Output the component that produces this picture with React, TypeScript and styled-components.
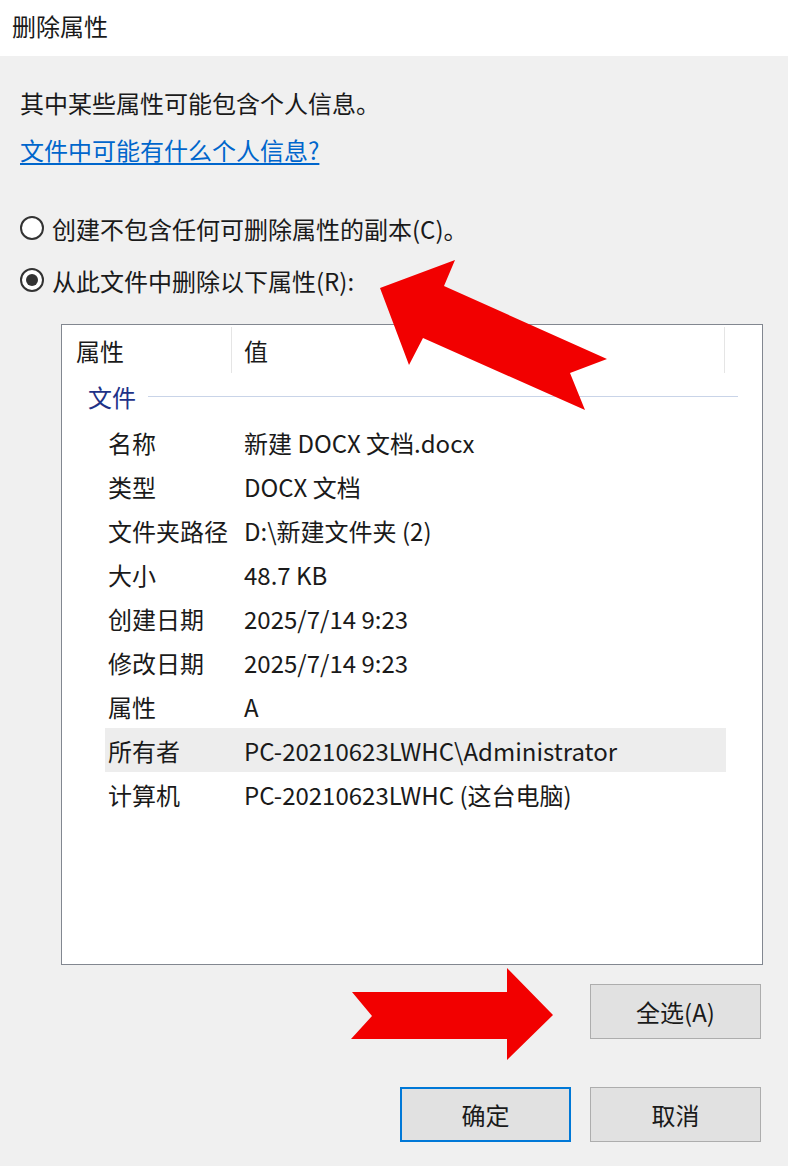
import React from 'react';
import styled, { createGlobalStyle } from 'styled-components';

const GlobalStyle = createGlobalStyle`
  html, body {
    margin: 0;
    padding: 0;
    background: #f0f0f0;
  }
  body {
    font-family: "Noto Sans CJK SC", "Noto Sans", sans-serif;
    color: #1a1a1a;
  }
`;

const Window = styled.div`
  position: relative;
  width: 788px;
  height: 1166px;
  display: flex;
  flex-direction: column;
  background: #f0f0f0;
  overflow: hidden;
  font-size: 24px;
`;

const TitleBar = styled.div`
  height: 56px;
  flex-shrink: 0;
  display: flex;
  align-items: center;
  padding-left: 12px;
  background: #ffffff;
  padding-bottom: 6px;
  box-sizing: border-box;
`;

const Body = styled.div`
  display: flex;
  flex-direction: column;
  padding: 32px 0 0 20px;
`;

const Line = styled.div`
  line-height: 30px;
  height: 30px;
`;

const HelpLink = styled.a`
  line-height: 30px;
  height: 30px;
  margin-top: 17px;
  color: #0066cc;
  text-decoration: underline;
  text-underline-offset: 3px;
  align-self: flex-start;
`;

const RadioRow = styled.label<{ $first?: boolean }>`
  display: flex;
  align-items: center;
  gap: 8px;
  height: 30px;
  margin-top: ${p => (p.$first ? '48px' : '22px')};
`;

const RadioCircle = styled.span<{ $checked?: boolean }>`
  width: 24px;
  height: 24px;
  box-sizing: border-box;
  border: 2px solid #333;
  border-radius: 50%;
  background: #fff;
  display: flex;
  align-items: center;
  justify-content: center;

  &::after {
    content: '';
    width: 12px;
    height: 12px;
    border-radius: 50%;
    background: ${p => (p.$checked ? '#333' : 'transparent')};
  }
`;

const ListBox = styled.div`
  margin: 29px 25px 0 61px;
  height: 641px;
  box-sizing: border-box;
  border: 1px solid #828790;
  background: #ffffff;
  display: flex;
  flex-direction: column;
`;

const HeaderRow = styled.div`
  display: grid;
  grid-template-columns: 170px 493px 1fr;
  height: 48px;
`;

const HeaderCell = styled.div<{ $pad: number }>`
  display: flex;
  align-items: center;
  padding-left: ${p => p.$pad}px;
  border-right: 1px solid #e5e5e5;
  margin: 2px 0 0;

  &:last-child {
    border-right: none;
  }
`;

const GroupRow = styled.div`
  display: flex;
  align-items: center;
  height: 47px;
  padding: 0 24px 0 26px;
  gap: 12px;
  color: #1e3287;

  &::after {
    content: '';
    flex: 1;
    height: 1px;
    background: #c9d4e8;
  }
`;

const Row = styled.div<{ $selected?: boolean }>`
  display: grid;
  grid-template-columns: 126px 1fr;
  height: 44px;
  align-items: center;
  margin: 0 36px 0 43px;
  background: ${p => (p.$selected ? '#ededed' : 'transparent')};
`;

const Label = styled.span`
  padding-left: 3px;
`;

const Value = styled.span`
  padding-left: 13px;
  white-space: nowrap;
`;

const ButtonRow = styled.div<{ $top: number }>`
  display: flex;
  justify-content: flex-end;
  gap: 19px;
  margin-top: ${p => p.$top}px;
  padding-right: 27px;
`;

const Button = styled.button<{ $default?: boolean }>`
  width: 171px;
  height: 55px;
  box-sizing: border-box;
  font-family: inherit;
  font-size: 24px;
  color: #1a1a1a;
  background: #e1e1e1;
  border: ${p => (p.$default ? '2px solid #0078d7' : '1px solid #adadad')};
  border-radius: 0;
  padding: 0;
`;

const Overlay = styled.svg`
  position: absolute;
  left: 0;
  top: 0;
  pointer-events: none;
`;

const rows: { label: string; value: string; selected?: boolean }[] = [
  { label: '名称', value: '新建 DOCX 文档.docx' },
  { label: '类型', value: 'DOCX 文档' },
  { label: '文件夹路径', value: 'D:\\新建文件夹 (2)' },
  { label: '大小', value: '48.7 KB' },
  { label: '创建日期', value: '2025/7/14 9:23' },
  { label: '修改日期', value: '2025/7/14 9:23' },
  { label: '属性', value: 'A' },
  { label: '所有者', value: 'PC-20210623LWHC\\Administrator', selected: true },
  { label: '计算机', value: 'PC-20210623LWHC (这台电脑)' },
];

export default function App() {
  return (
    <>
      <GlobalStyle />
      <Window>
        <TitleBar>删除属性</TitleBar>
        <Body>
          <Line>其中某些属性可能包含个人信息。</Line>
          <HelpLink href="#">文件中可能有什么个人信息?</HelpLink>
          <RadioRow $first>
            <RadioCircle />
            创建不包含任何可删除属性的副本(C)。
          </RadioRow>
          <RadioRow>
            <RadioCircle $checked />
            从此文件中删除以下属性(R):
          </RadioRow>
        </Body>
        <ListBox>
          <HeaderRow>
            <HeaderCell $pad={14}>属性</HeaderCell>
            <HeaderCell $pad={12}>值</HeaderCell>
            <HeaderCell $pad={0} />
          </HeaderRow>
          <GroupRow>文件</GroupRow>
          {rows.map(r => (
            <Row key={r.label} $selected={r.selected}>
              <Label>{r.label}</Label>
              <Value>{r.value}</Value>
            </Row>
          ))}
        </ListBox>
        <ButtonRow $top={19}>
          <Button>全选(A)</Button>
        </ButtonRow>
        <ButtonRow $top={48}>
          <Button $default>确定</Button>
          <Button>取消</Button>
        </ButtonRow>
        <Overlay width="788" height="1166" viewBox="0 0 788 1166">
          <polygon
            fill="#f20000"
            points="380,288 455,260 444,286 607,359 570,373 585,410 423,338 409,365"
          />
          <polygon
            fill="#f20000"
            points="352,992 507,992 507,968 553,1015 507,1060 507,1039 351,1039 372,1016"
          />
        </Overlay>
      </Window>
    </>
  );
}
